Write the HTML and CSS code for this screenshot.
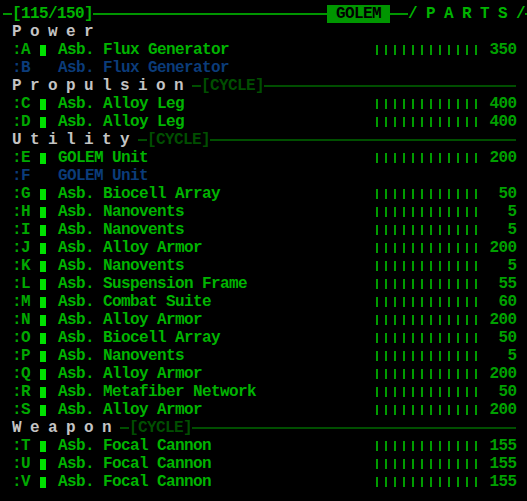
FILE: index.html
```html
<!DOCTYPE html>
<html>
<head>
<meta charset="utf-8">
<link rel="stylesheet" href="styles.css">
</head>
<body>
<div class="panel">
  <div class="row head">
    <span class="hline w1"></span><span class="hlabel">[115/150]</span><span class="hline grow"></span><span class="golem"> GOLEM </span><span class="hline w2"></span><span class="hlabel">/ P A R T S /</span><span class="hline w0"></span>
  </div>

  <div class="row sect"><span class="slabel">P o w e r</span></div>
  <div class="row item"><span class="key">:A</span><span class="dot"></span><span class="name">Asb. Flux Generator</span><span class="bars"></span><span class="num">350</span></div>
  <div class="row item off"><span class="key">:B</span><span class="dot"></span><span class="name">Asb. Flux Generator</span></div>

  <div class="row sect"><span class="slabel">P r o p u l s i o n</span><span class="sline w1"></span><span class="cycle">[CYCLE]</span><span class="sline grow"></span></div>
  <div class="row item"><span class="key">:C</span><span class="dot"></span><span class="name">Asb. Alloy Leg</span><span class="bars"></span><span class="num">400</span></div>
  <div class="row item"><span class="key">:D</span><span class="dot"></span><span class="name">Asb. Alloy Leg</span><span class="bars"></span><span class="num">400</span></div>

  <div class="row sect"><span class="slabel">U t i l i t y</span><span class="sline w1"></span><span class="cycle">[CYCLE]</span><span class="sline grow"></span></div>
  <div class="row item"><span class="key">:E</span><span class="dot"></span><span class="name">GOLEM Unit</span><span class="bars"></span><span class="num">200</span></div>
  <div class="row item off"><span class="key">:F</span><span class="dot"></span><span class="name">GOLEM Unit</span></div>
  <div class="row item"><span class="key">:G</span><span class="dot"></span><span class="name">Asb. Biocell Array</span><span class="bars"></span><span class="num">50</span></div>
  <div class="row item"><span class="key">:H</span><span class="dot"></span><span class="name">Asb. Nanovents</span><span class="bars"></span><span class="num">5</span></div>
  <div class="row item"><span class="key">:I</span><span class="dot"></span><span class="name">Asb. Nanovents</span><span class="bars"></span><span class="num">5</span></div>
  <div class="row item"><span class="key">:J</span><span class="dot"></span><span class="name">Asb. Alloy Armor</span><span class="bars"></span><span class="num">200</span></div>
  <div class="row item"><span class="key">:K</span><span class="dot"></span><span class="name">Asb. Nanovents</span><span class="bars"></span><span class="num">5</span></div>
  <div class="row item"><span class="key">:L</span><span class="dot"></span><span class="name">Asb. Suspension Frame</span><span class="bars"></span><span class="num">55</span></div>
  <div class="row item"><span class="key">:M</span><span class="dot"></span><span class="name">Asb. Combat Suite</span><span class="bars"></span><span class="num">60</span></div>
  <div class="row item"><span class="key">:N</span><span class="dot"></span><span class="name">Asb. Alloy Armor</span><span class="bars"></span><span class="num">200</span></div>
  <div class="row item"><span class="key">:O</span><span class="dot"></span><span class="name">Asb. Biocell Array</span><span class="bars"></span><span class="num">50</span></div>
  <div class="row item"><span class="key">:P</span><span class="dot"></span><span class="name">Asb. Nanovents</span><span class="bars"></span><span class="num">5</span></div>
  <div class="row item"><span class="key">:Q</span><span class="dot"></span><span class="name">Asb. Alloy Armor</span><span class="bars"></span><span class="num">200</span></div>
  <div class="row item"><span class="key">:R</span><span class="dot"></span><span class="name">Asb. Metafiber Network</span><span class="bars"></span><span class="num">50</span></div>
  <div class="row item"><span class="key">:S</span><span class="dot"></span><span class="name">Asb. Alloy Armor</span><span class="bars"></span><span class="num">200</span></div>

  <div class="row sect"><span class="slabel">W e a p o n</span><span class="sline w1"></span><span class="cycle">[CYCLE]</span><span class="sline grow"></span></div>
  <div class="row item"><span class="key">:T</span><span class="dot"></span><span class="name">Asb. Focal Cannon</span><span class="bars"></span><span class="num">155</span></div>
  <div class="row item"><span class="key">:U</span><span class="dot"></span><span class="name">Asb. Focal Cannon</span><span class="bars"></span><span class="num">155</span></div>
  <div class="row item"><span class="key">:V</span><span class="dot"></span><span class="name">Asb. Focal Cannon</span><span class="bars"></span><span class="num">155</span></div>
</div>
</body>
</html>
```
FILE: styles.css
```css
html, body {
  margin: 0;
  padding: 0;
  background: #000;
}
body {
  width: 527px;
  height: 501px;
  overflow: hidden;
  font-family: "Liberation Mono", "DejaVu Sans Mono", monospace;
  font-size: 16px;
  letter-spacing: -0.6px;
  font-weight: bold;
}
.panel {
  padding: 5px 0 0 3px;
  width: 513px;
}
.row {
  display: flex;
  align-items: center;
  height: 18px;
  line-height: 18px;
  white-space: pre;
}
.head {
  width: 524px;
  color: #00b400;
}
.hline {
  height: 2px;
  background: #009600;
}
.w1 { width: 9px; flex: none; }
.w2 { width: 18px; flex: none; }
.w0 { width: 2px; flex: none; }
.grow { flex: 1; }
.golem {
  background: #009600;
  color: #000;
  height: 18px;
  width: 63px;
  flex: none;
}
.sect {
  padding-left: 9px;
}
.slabel {
  color: #c4c4c4;
  margin-right: 9px;
}
.sline {
  height: 2px;
  background: #004e00;
}
.cycle {
  color: #004e00;
}
.item {
  color: #00b400;
}
.key {
  width: 18px;
  padding-left: 9px;
  color: #00a800;
  flex: none;
}
.dot {
  flex: none;
  width: 6px;
  height: 11px;
  margin: 0 12px 0 10px;
  background: #00e000;
}
.name {
  flex: 1;
}
.bars {
  flex: none;
  width: 108px;
  height: 10px;
  margin-right: 9px;
  background: repeating-linear-gradient(to right, transparent 0 3px, #009c00 3px 5px, transparent 5px 9px);
}
.num {
  flex: none;
  width: 27px;
  text-align: right;
  margin-right: -0.6px;
  color: #00a000;
}
.off .key,
.off .name {
  color: #0b3c7a;
}
.off .dot {
  background: transparent;
}
```
